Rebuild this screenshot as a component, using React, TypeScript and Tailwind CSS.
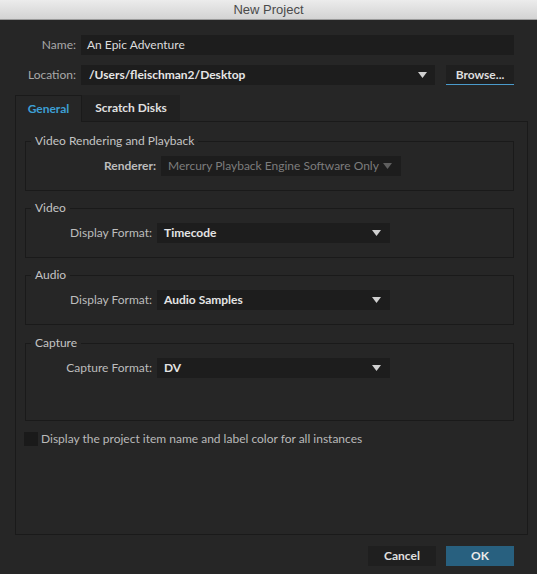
const font = { fontFamily: 'Lato, "Open Sans", sans-serif' };

const Caret = ({ dim = false }: { dim?: boolean }) => (
  <svg width="9" height="6" viewBox="0 0 9 6" className="shrink-0">
    <path d="M0 0 H9 L4.5 6 Z" fill={dim ? '#5f5f5f' : '#d0d0d0'} />
  </svg>
);

const Select = ({ value, width, dim = false }: { value: string; width: string; dim?: boolean }) => (
  <div className={`${width} h-[20px] bg-[#1d1d1d] flex items-center justify-between pl-[7px] pr-[9px]`}>
    <span className={dim ? 'text-[#7c7c7c]' : 'text-[#e4e4e4] font-bold'}>{value}</span>
    <Caret dim={dim} />
  </div>
);

const Group = ({ title, children, className = '' }: { title: string; children: React.ReactNode; className?: string }) => (
  <fieldset className={`border border-[#1a1a1a] ${className}`}>
    <legend className="ml-[5px] px-[4px] leading-4 text-[#c4c4c4]">{title}</legend>
    {children}
  </fieldset>
);

const App = () => {
  return (
    <div className="w-[537px] h-[574px] bg-[#262626] text-[12px] overflow-hidden" style={font}>
      <div
        className="h-[20px] bg-gradient-to-b from-[#ececec] to-[#d3d3d3] border-b border-[#9a9a9a] flex items-center justify-center text-[13px] text-[#4a4a4a]"
        style={{ fontFamily: '"Liberation Sans", Arial, sans-serif' }}
      >
        New Project
      </div>

      <div className="mt-[15px] flex items-center">
        <span className="w-[76px] text-right text-[#a9a9a9]">Name:</span>
        <div className="ml-[5px] w-[433px] h-[20px] bg-[#1d1d1d] flex items-center pl-[6px] text-[#dcdcdc]">
          An Epic Adventure
        </div>
      </div>

      <div className="mt-[10px] flex items-center">
        <span className="w-[76px] text-right text-[#a9a9a9]">Location:</span>
        <div className="ml-[5px] w-[354px] h-[20px] bg-[#1d1d1d] flex items-center justify-between pl-[8px] pr-[8px]">
          <span className="font-bold text-[#e6e6e6]">/Users/fleischman2/Desktop</span>
          <Caret />
        </div>
        <div className="ml-[11px] w-[68px] h-[20px] bg-[#1f1f1f] border-b border-[#4a9acb] flex items-center justify-center font-bold text-[#dedede]">
          Browse...
        </div>
      </div>

      <div className="mt-[10px] ml-[15px] w-[513px]">
        <div className="flex h-[27px]">
          <div className="w-[67px] border-l border-t border-r border-[#1a1a1a] flex items-center justify-center text-[#3d9fd4] font-bold">
            General
          </div>
          <div className="w-[98px] bg-[#212121] border-b border-[#1a1a1a] flex items-center justify-center text-[#e0e0e0] font-bold">
            Scratch Disks
          </div>
          <div className="flex-1 border-b border-[#1a1a1a]" />
        </div>
        <div className="h-[413px] border-l border-r border-b border-[#1a1a1a] pt-[11px] pl-[9px] pr-[13px] flex flex-col">
          <Group title="Video Rendering and Playback" className="pt-[7px] pb-[14px]">
            <div className="flex items-center">
              <span className="w-[130px] text-right text-[#bdbdbd] font-bold">Renderer:</span>
              <div className="ml-[5px]">
                <Select value="Mercury Playback Engine Software Only" width="w-[240px]" dim />
              </div>
            </div>
          </Group>

          <Group title="Video" className="mt-[9px] pt-[7px] pb-[14px]">
            <div className="flex items-center">
              <span className="w-[126px] text-right text-[#bdbdbd]">Display Format:</span>
              <div className="ml-[5px]">
                <Select value="Timecode" width="w-[233px]" />
              </div>
            </div>
          </Group>

          <Group title="Audio" className="mt-[9px] pt-[7px] pb-[14px]">
            <div className="flex items-center">
              <span className="w-[126px] text-right text-[#bdbdbd]">Display Format:</span>
              <div className="ml-[5px]">
                <Select value="Audio Samples" width="w-[233px]" />
              </div>
            </div>
          </Group>

          <Group title="Capture" className="mt-[10px] pt-[7px] pb-[42px]">
            <div className="flex items-center">
              <span className="w-[126px] text-right text-[#bdbdbd]">Capture Format:</span>
              <div className="ml-[5px]">
                <Select value="DV" width="w-[233px]" />
              </div>
            </div>
          </Group>

          <div className="mt-[9px] flex items-center -ml-[1px]">
            <div className="w-[14px] h-[14px] bg-[#1a1a1a]" />
            <span className="ml-[3px] text-[#b9b9b9]">Display the project item name and label color for all instances</span>
          </div>
        </div>
      </div>

      <div className="mt-[11px] flex justify-end pr-[23px]">
        <div className="w-[68px] h-[20px] bg-[#1f1f1f] flex items-center justify-center font-bold text-[#e0e0e0]">
          Cancel
        </div>
        <div className="ml-[10px] w-[68px] h-[20px] bg-[#28607f] flex items-center justify-center font-bold text-[#eaeaea]">
          OK
        </div>
      </div>
    </div>
  );
};

export default App;
